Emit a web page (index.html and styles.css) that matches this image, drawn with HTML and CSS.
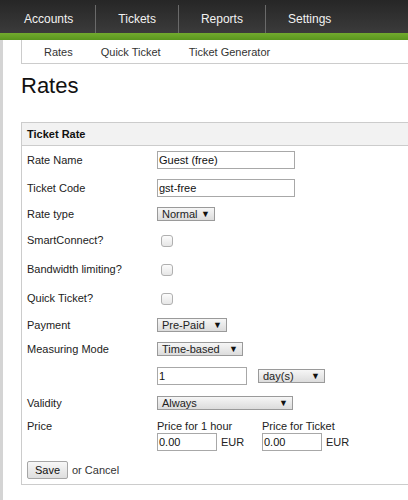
FILE: index.html
```html
<!DOCTYPE html>
<html>
<head>
<meta charset="utf-8">
<link rel="stylesheet" href="styles.css">
</head>
<body>
<div class="topbar">
  <nav class="mainnav">
    <a class="navitem">Accounts</a>
    <a class="navitem active">Tickets</a>
    <a class="navitem">Reports</a>
    <a class="navitem last">Settings</a>
  </nav>
</div>
<div class="greenbar"></div>
<div class="wrap">
  <div class="content">
    <div class="subnav">
      <a class="subitem">Rates</a>
      <a class="subitem">Quick Ticket</a>
      <a class="subitem">Ticket Generator</a>
    </div>
    <h1 class="title">Rates</h1>
    <div class="box">
      <div class="boxhead">Ticket Rate</div>
      <div class="row r-input">
        <div class="label">Rate Name</div>
        <div class="ctrl"><span class="input w138">Guest (free)</span></div>
      </div>
      <div class="row r-input">
        <div class="label">Ticket Code</div>
        <div class="ctrl"><span class="input w138">gst-free</span></div>
      </div>
      <div class="row r-select">
        <div class="label">Rate type</div>
        <div class="ctrl"><span class="select w58"><span>Normal</span><span class="arr">▼</span></span></div>
      </div>
      <div class="row r-check">
        <div class="label">SmartConnect?</div>
        <div class="ctrl"><span class="check"></span></div>
      </div>
      <div class="row r-check">
        <div class="label">Bandwidth limiting?</div>
        <div class="ctrl"><span class="check"></span></div>
      </div>
      <div class="row r-check">
        <div class="label">Quick Ticket?</div>
        <div class="ctrl"><span class="check"></span></div>
      </div>
      <div class="row r-select">
        <div class="label">Payment</div>
        <div class="ctrl"><span class="select w70"><span>Pre-Paid</span><span class="arr">▼</span></span></div>
      </div>
      <div class="row r-select">
        <div class="label">Measuring Mode</div>
        <div class="ctrl"><span class="select w86"><span>Time-based</span><span class="arr">▼</span></span></div>
      </div>
      <div class="row r-dur">
        <div class="label"></div>
        <div class="ctrl dur"><span class="input w90">1</span><span class="select w67"><span>day(s)</span><span class="arr">▼</span></span></div>
      </div>
      <div class="row r-select">
        <div class="label">Validity</div>
        <div class="ctrl"><span class="select w136"><span>Always</span><span class="arr">▼</span></span></div>
      </div>
      <div class="row r-price">
        <div class="label">Price</div>
        <div class="ctrl prices">
          <div class="price">
            <div class="plabel">Price for 1 hour</div>
            <div class="pline"><span class="input w60">0.00</span><span class="cur">EUR</span></div>
          </div>
          <div class="price">
            <div class="plabel">Price for Ticket</div>
            <div class="pline"><span class="input w60">0.00</span><span class="cur">EUR</span></div>
          </div>
        </div>
      </div>
      <div class="actions">
        <span class="btn">Save</span><span class="or">or Cancel</span>
      </div>
    </div>
  </div>
</div>
</body>
</html>
```

FILE: styles.css
```css
html, body {
  margin: 0;
  padding: 0;
  background: #fff;
  overflow: hidden;
}
body {
  font-family: "Liberation Sans", Arial, sans-serif;
  font-size: 11px;
  line-height: 13px;
  color: #222;
}
a { text-decoration: none; }

.topbar {
  height: 33px;
  background: linear-gradient(#262626, #3b3b3b);
}
.mainnav {
  display: flex;
  height: 28px;
  padding-top: 5px;
  padding-left: 2px;
}
.navitem {
  display: flex;
  align-items: center;
  padding: 0 23px 0 22px;
  color: #f2f2f2;
  font-size: 12px;
  position: relative;
}
.navitem::after {
  content: "";
  position: absolute;
  right: 0;
  top: 0;
  bottom: 0;
  width: 1px;
  background: #6a6a6a;
}
.navitem.last::after { display: none; }

.greenbar {
  height: 7px;
  background: linear-gradient(#72ab2e, #5a961e);
}

.wrap {
  border-left: 3px solid #d4d4d4;
  min-height: 460px;
}
.content {
  padding-left: 18px;
}

.subnav {
  display: flex;
  height: 23px;
  align-items: center;
  border-left: 1px solid #cccccc;
  border-bottom: 1px solid #cccccc;
  padding-left: 22px;
  gap: 28px;
}
.subitem {
  color: #333;
  font-size: 11px;
  padding-top: 1px;
}

.title {
  margin: 0;
  font-size: 22px;
  font-weight: normal;
  color: #111;
  line-height: 26px;
  padding-top: 9px;
  height: 49px;
  box-sizing: border-box;
  margin-bottom: 9px;
}

.box {
  border: 1px solid #cccccc;
  border-right: none;
  margin-bottom: 10px;
}
.boxhead {
  background: #f2f2f2;
  border-bottom: 1px solid #cccccc;
  font-weight: bold;
  color: #111;
  height: 22px;
  padding-left: 5px;
  display: flex;
  align-items: center;
}

.row {
  display: flex;
  align-items: center;
  padding: 0 5px;
}
.r-input { height: 28px; }
.r-select { height: 24px; }
.r-check { height: 29px; }
.r-dur { height: 30px; }
.r-price {
  align-items: flex-start;
  padding-top: 5px;
  height: 37px;
}
.label {
  width: 130px;
  flex: none;
  color: #222;
}
.ctrl {
  display: flex;
  align-items: center;
}

.input {
  display: inline-block;
  box-sizing: border-box;
  height: 18px;
  border: 1px solid #a8a8a8;
  background: #fff;
  padding: 1px 1px 0 1px;
  line-height: 15px;
  color: #111;
}
.w138 { width: 138px; }
.w90 { width: 90px; }
.w60 { width: 60px; }

.select {
  display: inline-flex;
  justify-content: space-between;
  align-items: center;
  box-sizing: border-box;
  height: 14px;
  border: 1px solid #9a9a9a;
  background: linear-gradient(#f6f6f6, #dcdcdc);
  padding: 0 4px 0 4px;
  color: #222;
  line-height: 12px;
}
.select .arr {
  font-size: 9px;
  color: #111;
}
.w58 { width: 58px; }
.w70 { width: 70px; }
.w86 { width: 86px; }
.w67 { width: 67px; }
.w136 { width: 136px; }

.dur { gap: 11px; }

.check {
  display: inline-block;
  box-sizing: border-box;
  width: 12px;
  height: 12px;
  margin-left: 4px;
  border: 1px solid #b0b0b0;
  border-radius: 3px;
  background: linear-gradient(#fcfcfc, #e6e6e6);
}

.prices {
  display: flex;
  align-items: flex-start;
}
.price { width: 105px; }
.plabel { color: #222; height: 13px; line-height: 13px; }
.pline {
  display: flex;
  align-items: center;
  gap: 4px;
}
.cur { color: #222; }

.actions {
  display: flex;
  align-items: center;
  padding: 4px 5px 5px 5px;
}
.btn {
  display: inline-flex;
  align-items: center;
  justify-content: center;
  box-sizing: border-box;
  width: 41px;
  height: 18px;
  border: 1px solid #a6a6a6;
  border-radius: 2px;
  background: linear-gradient(#f7f7f7, #dedede);
  color: #111;
}
.or {
  margin-left: 4px;
  color: #333;
}
```
